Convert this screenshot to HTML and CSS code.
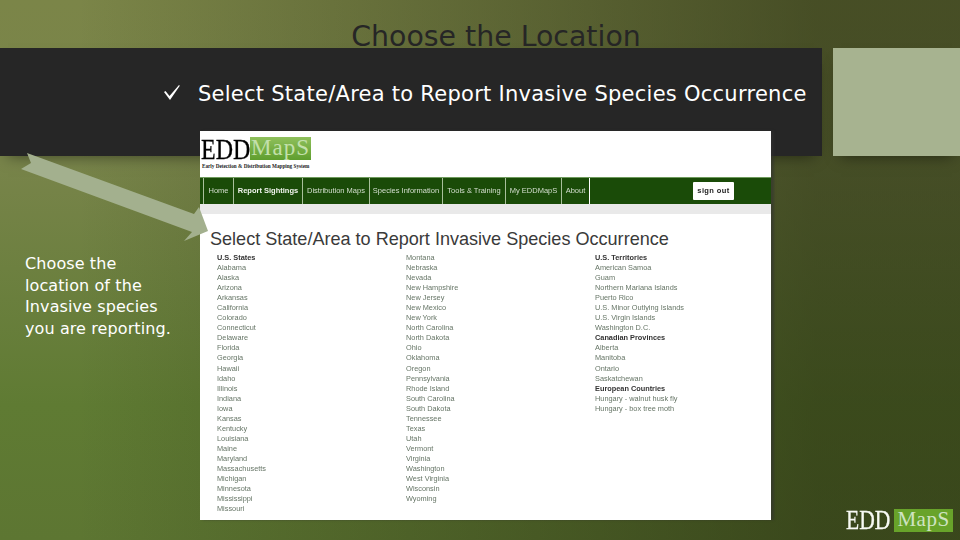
FILE: index.html
```html
<!DOCTYPE html>
<html lang="en">
<head>
<meta charset="UTF-8">
<title>Choose the Location</title>
<link rel="stylesheet" href="styles.css">
</head>
<body>
<div class="slide">
    <h1 class="title">Choose the Location</h1>
    <div class="bands">
        <div class="band">
            <svg class="check" width="39" height="27" viewBox="0 0 39 27">
                <polygon points="5,11 6.5,10 10.5,15 20,4 20.8,4.8 11,19" fill="#fff"/>
            </svg>
            <span class="band_text">Select State/Area to Report Invasive Species Occurrence</span>
        </div>
        <div class="tile"></div>
    </div>
    <p class="caption">Choose the<br>location of the<br>Invasive species<br>you are reporting.</p>

    <div class="shot">
        <div class="shot_logo">
            <div class="logo">
                <span class="logo_edd"><span class="squeeze">EDD</span></span><span class="logo_maps">MapS</span>
            </div>
            <div class="logo_sub">Early Detection &amp; Distribution Mapping System</div>
        </div>
        <div class="nav">
            <a class="home">Home</a>
            <a class="report">Report Sightings</a>
            <a class="dist">Distribution Maps</a>
            <a class="species">Species Information</a>
            <a class="tools">Tools &amp; Training</a>
            <a class="my">My EDDMapS</a>
            <a class="about">About</a>
            <span class="signout">sign out</span>
        </div>
        <div class="greybar"></div>
        <h2 class="shot_title">Select State/Area to Report Invasive Species Occurrence</h2>
        <div class="lists">
            <ul>
                <li class="head">U.S. States</li>
                <li>Alabama</li>
                <li>Alaska</li>
                <li>Arizona</li>
                <li>Arkansas</li>
                <li>California</li>
                <li>Colorado</li>
                <li>Connecticut</li>
                <li>Delaware</li>
                <li>Florida</li>
                <li>Georgia</li>
                <li>Hawaii</li>
                <li>Idaho</li>
                <li>Illinois</li>
                <li>Indiana</li>
                <li>Iowa</li>
                <li>Kansas</li>
                <li>Kentucky</li>
                <li>Louisiana</li>
                <li>Maine</li>
                <li>Maryland</li>
                <li>Massachusetts</li>
                <li>Michigan</li>
                <li>Minnesota</li>
                <li>Mississippi</li>
                <li>Missouri</li>
            </ul>
            <ul>
                <li>Montana</li>
                <li>Nebraska</li>
                <li>Nevada</li>
                <li>New Hampshire</li>
                <li>New Jersey</li>
                <li>New Mexico</li>
                <li>New York</li>
                <li>North Carolina</li>
                <li>North Dakota</li>
                <li>Ohio</li>
                <li>Oklahoma</li>
                <li>Oregon</li>
                <li>Pennsylvania</li>
                <li>Rhode Island</li>
                <li>South Carolina</li>
                <li>South Dakota</li>
                <li>Tennessee</li>
                <li>Texas</li>
                <li>Utah</li>
                <li>Vermont</li>
                <li>Virginia</li>
                <li>Washington</li>
                <li>West Virginia</li>
                <li>Wisconsin</li>
                <li>Wyoming</li>
            </ul>
            <ul>
                <li class="head">U.S. Territories</li>
                <li>American Samoa</li>
                <li>Guam</li>
                <li>Northern Mariana Islands</li>
                <li>Puerto Rico</li>
                <li>U.S. Minor Outlying Islands</li>
                <li>U.S. Virgin Islands</li>
                <li>Washington D.C.</li>
                <li class="head">Canadian Provinces</li>
                <li>Alberta</li>
                <li>Manitoba</li>
                <li>Ontario</li>
                <li>Saskatchewan</li>
                <li class="head">European Countries</li>
                <li>Hungary - walnut husk fly</li>
                <li>Hungary - box tree moth</li>
            </ul>
        </div>
    </div>

    <svg class="arrow" width="960" height="540" viewBox="0 0 960 540">
        <polygon points="27,153 194,214 199,207 208,231 184,241 192,232 21,169 31,163" fill="#a3b08e"/>
    </svg>

    <div class="corner_logo">
        <span class="corner_edd"><span class="squeeze">EDD</span></span><span class="corner_maps">MapS</span>
    </div>
</div>
</body>
</html>
```

FILE: styles.css
```css
*{margin:0;padding:0;box-sizing:border-box}
html,body{width:960px;height:540px;overflow:hidden}
ul,li{list-style:none}
.slide {position: relative; width: 960px; height: 540px; font-family: "DejaVu Sans", Verdana, sans-serif; background-color: #5f7b33; background-image: linear-gradient(90deg, rgba(30,35,10,0) 8%, rgba(30,35,10,.56) 85%), linear-gradient(180deg, #7b8548 0%, #78844a 30%, #5f7b33 75%, #5d7632 100%);}

.title {height: 48px; padding-top: 17px; padding-left: 32px; font-size: 28.4px; font-weight: normal; line-height: 40px; text-align: center; color: #262626;}

.bands {display: flex; gap: 11px; height: 108px;}
.band {width: 822px; padding: 33px 0 0 159px; background-color: #262626; color: #fff; display: flex; box-shadow: 0 8px 14px -8px rgba(0,0,0,.5);}
.check {flex: none;}
.band_text {font-size: 21px; line-height: 27px; letter-spacing: .26px; white-space: nowrap;}
.tile {flex: 1; background-color: #a7b390; box-shadow: 0 8px 14px -8px rgba(0,0,0,.5);}

.caption {margin: 97px 0 0 25px; font-size: 16px; line-height: 21.5px; letter-spacing: .1px; color: #fff;}

.shot {position: absolute; left: 200px; top: 131px; width: 571px; height: 389px; background-color: #fff; box-shadow: 3px 0 2px rgba(50,50,50,.55); font-family: "Liberation Sans", Arial, sans-serif;}
.shot_logo {height: 46px; padding-top: 6px;}
.logo {display: flex; height: 23px; font-family: "Liberation Serif", "Times New Roman", serif;}
.logo_edd {flex: none; width: 50px; padding-left: 1px; font-size: 30px; line-height: 23px; color: #000; -webkit-text-stroke: .3px #000; white-space: nowrap;}
.squeeze {display: inline-block; transform: scaleX(.8); transform-origin: left center;}
.logo_maps {width: 61px; height: 23px; background: linear-gradient(180deg, #8fc05c, #5f9e2e); color: #c3e0ab; font-size: 23px; line-height: 22px; letter-spacing: 1px; text-align: center;}
.logo_sub {margin: 3px 0 0 2px; font-family: "Liberation Serif", serif; font-size: 5.2px; font-weight: bold; line-height: 7px; color: #222; white-space: nowrap;}

.nav {display: flex; align-items: stretch; height: 27px; padding-left: 3px; background-color: #1a4b08; border-top: 1px solid #6e9a5c; font-size: 7.5px; line-height: 26px; color: #d5dfd0; filter: blur(.3px);}
.nav a {border-left: 1px solid #a9c09c; text-align: center; white-space: nowrap;}
.nav .home {width: 30px;}
.nav .report {width: 69px; font-weight: bold; color: #f2f5ef;}
.nav .dist {width: 67px;}
.nav .species {width: 73px;}
.nav .tools {width: 63px;}
.nav .my {width: 56px;}
.nav .about {width: 29px; border-right: 1px solid #fff;}
.signout {align-self: center; width: 41px; height: 18px; margin-left: 103px; background-color: #fff; border-radius: 1px; color: #222; font-weight: bold; text-align: center; line-height: 18px; letter-spacing: .4px;}

.greybar {height: 10px; background-color: #e9e9e9;}
.shot_title {padding: 15px 0 0 10px; font-size: 18.07px; font-weight: normal; line-height: 20px; color: #3a3a3a; white-space: nowrap;}

.lists {display: flex; padding: 4px 0 0 17px; font-size: 7.35px; line-height: 10.05px; color: #667566; filter: blur(.35px);}
.lists ul {flex: none; width: 189px; white-space: nowrap;}
.lists .head {font-weight: bold; color: #333;}

.arrow {position: absolute; left: 0; top: 0; pointer-events: none;}

.corner_logo {position: absolute; left: 846px; top: 509px; display: flex; font-family: "Liberation Serif", serif;}
.corner_edd {flex: none; width: 48px; font-size: 27px; line-height: 23px; color: #f8faf4; -webkit-text-stroke: .3px #f8faf4; white-space: nowrap;}
.corner_maps {width: 59px; height: 23px; background-color: #68a32a; color: #cfe3c2; font-size: 21px; line-height: 21px; text-align: center; letter-spacing: .5px;}
```
